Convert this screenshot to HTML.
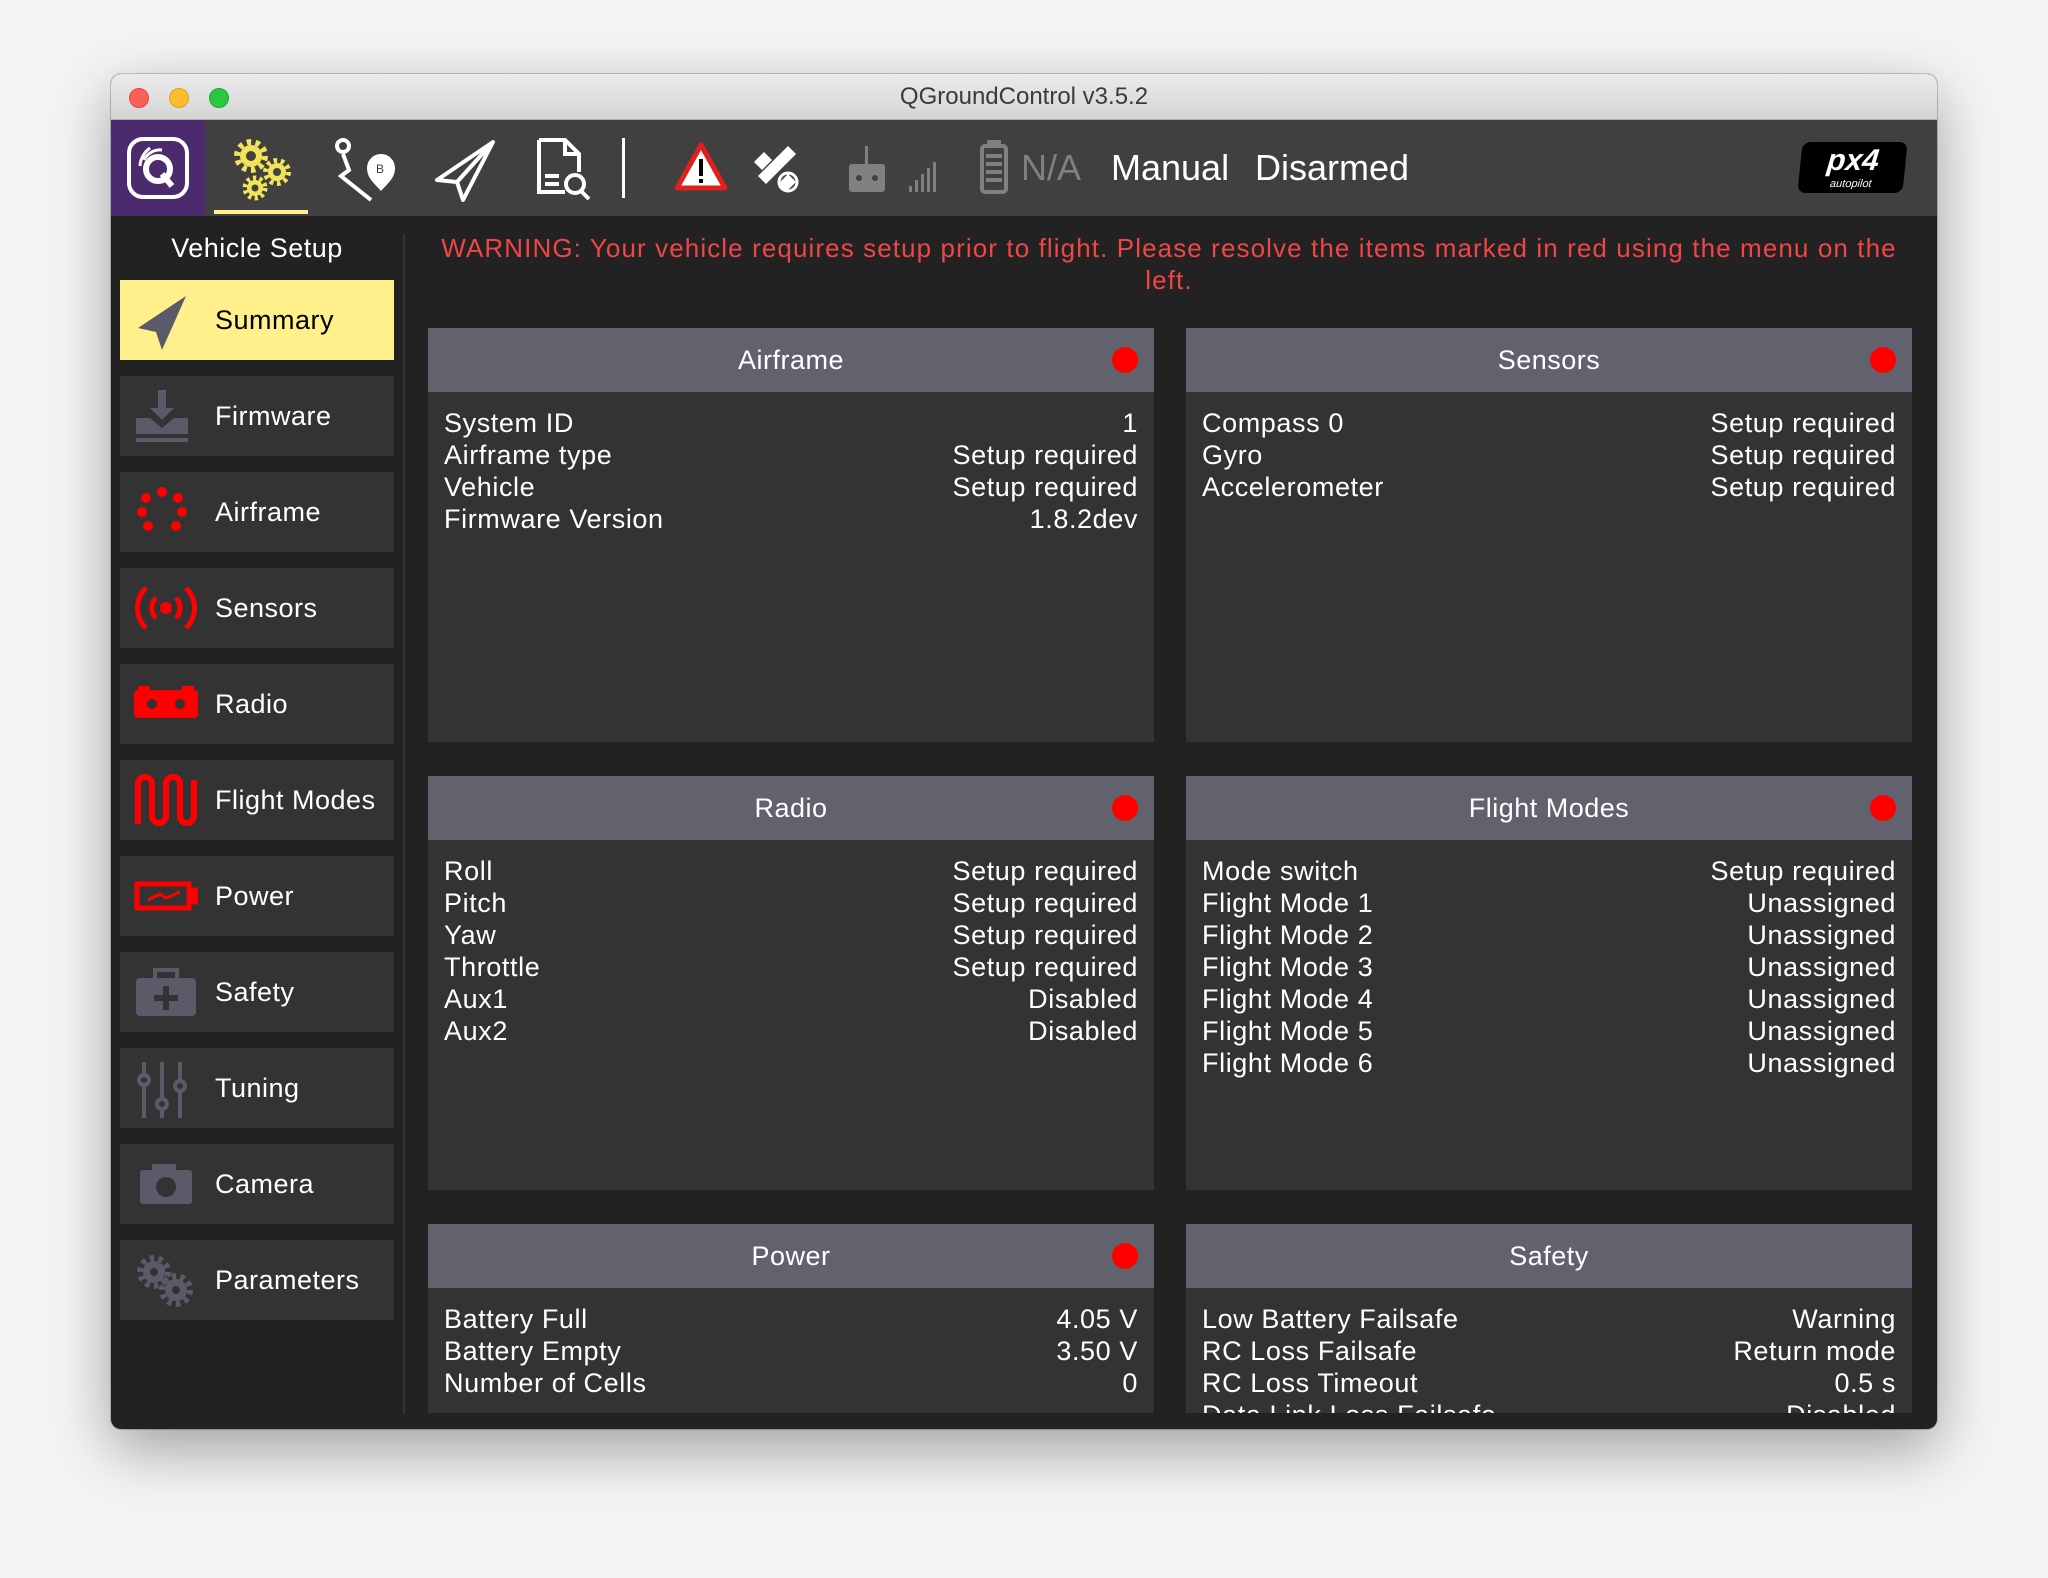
<!DOCTYPE html>
<html><head><meta charset="utf-8"><style>
*{margin:0;padding:0;box-sizing:border-box}
body{width:2048px;height:1578px;background:#f4f4f4;font-family:"Liberation Sans",sans-serif;position:relative;overflow:hidden}
.win{position:absolute;left:111px;top:74px;width:1826px;height:1355px;border-radius:10px;background:#222;box-shadow:0 20px 60px rgba(0,0,0,.35),0 0 0 1px rgba(0,0,0,.2);overflow:hidden}
.title{position:absolute;left:0;top:0;width:100%;height:46px;background:linear-gradient(#ebebeb,#d5d5d5);border-bottom:1px solid #b0b0b0;text-align:center;font-size:24px;line-height:46px;color:#3a3a3a}
.dot{position:absolute;top:14px;width:20px;height:20px;border-radius:50%}
.tb{position:absolute;left:0;top:46px;width:100%;height:96px;background:#404040}
.abs{position:absolute}
.side{position:absolute;left:9px;width:274px;height:80px;background:#333;color:#fff;font-size:27px;letter-spacing:0.5px}
.side span{position:absolute;left:95px;top:0;line-height:80px}
.side svg{position:absolute;left:14px;top:12px}
.panel{position:absolute;width:726px;background:#333;overflow:hidden}
.ph{height:64px;background:#62626e;color:#fff;font-size:27px;text-align:center;line-height:64px;position:relative;letter-spacing:0.5px}
.rd{position:absolute;right:16px;top:19px;width:26px;height:26px;border-radius:50%;background:#f00}
.pb{padding:15px 16px 0 16px;color:#fff;font-size:27px;letter-spacing:0.6px}
.r{display:flex;justify-content:space-between;height:32px;line-height:32px}
</style></head><body>
<div class="win">
<div class="title">QGroundControl v3.5.2
<div class="dot" style="left:18px;background:#fc5f57;border:1px solid #de4a42"></div>
<div class="dot" style="left:58px;background:#fdbc2e;border:1px solid #dea024"></div>
<div class="dot" style="left:98px;background:#29c840;border:1px solid #1fa831"></div>
</div>
<div class="tb">
<div class="abs" style="left:0;top:0;width:94px;height:96px;background:#4c2a6e"></div>
<svg class="abs" style="left:15px;top:16px" width="64" height="64" viewBox="0 0 64 64"><rect x="3" y="3" width="58" height="58" rx="14" fill="none" stroke="#fff" stroke-width="4"/><circle cx="32" cy="33" r="12" fill="none" stroke="#fff" stroke-width="6"/><path d="M36 38l10 12" stroke="#fff" stroke-width="6"/><path d="M18 24a18 18 0 0 1 18-10M14 30a24 24 0 0 1 10-18" stroke="#fff" stroke-width="3" fill="none"/></svg>
<div class="abs" style="left:103px;top:90px;width:94px;height:4px;background:#fff08c"></div>
<svg class="abs" style="left:118px;top:16px" width="66" height="66" viewBox="0 0 66 66">
<g fill="#f2e45a" stroke="#f2e45a">
<circle cx="22" cy="20" r="11" stroke="none"/><circle cx="22" cy="20" r="14" fill="none" stroke-width="6" stroke-dasharray="4.4 4.4"/>
<circle cx="48" cy="36" r="9" stroke="none"/><circle cx="48" cy="36" r="11.5" fill="none" stroke-width="5" stroke-dasharray="3.6 3.6"/>
<circle cx="26" cy="52" r="8" stroke="none"/><circle cx="26" cy="52" r="10" fill="none" stroke-width="5" stroke-dasharray="3.2 3.2"/>
</g><circle cx="22" cy="20" r="5" fill="#404040"/><circle cx="48" cy="36" r="4" fill="#404040"/><circle cx="26" cy="52" r="3.5" fill="#404040"/></svg>
<svg class="abs" style="left:222px;top:16px" width="64" height="68" viewBox="0 0 64 68" fill="none" stroke="#fff" stroke-width="4"><circle cx="10" cy="10" r="6"/><path d="M10 18l6 16-8 6 30 24"/><path d="M48 52c-10-10-12-14-12-20a12 12 0 0 1 24 0c0 6-2 10-12 20z" fill="#fff"/><text x="43" y="37" font-size="12" fill="#404040" stroke="none" font-family="Liberation Sans">B</text></svg>
<svg class="abs" style="left:322px;top:18px" width="64" height="64" viewBox="0 0 64 64" fill="none" stroke="#fff" stroke-width="4" stroke-linejoin="round"><path d="M60 4L4 42l20 2 6 18z M60 4L24 44 M60 4L30 62"/></svg>
<svg class="abs" style="left:422px;top:16px" width="64" height="66" viewBox="0 0 64 66" fill="none" stroke="#fff" stroke-width="4"><path d="M6 4h26l14 14v18M6 4v52h26M32 4v14h14"/><path d="M12 40h14M12 48h14"/><circle cx="42" cy="48" r="9"/><path d="M48 55l8 8"/></svg>
<div class="abs" style="left:511px;top:18px;width:3px;height:60px;background:#fff"></div>
<svg class="abs" style="left:563px;top:22px" width="54" height="50" viewBox="0 0 54 50"><path d="M27 3L51 46H3z" fill="#fff" stroke="#e0201c" stroke-width="5" stroke-linejoin="round"/><rect x="25" y="17" width="4" height="17" fill="#000"/><rect x="25" y="37" width="4" height="4" fill="#000"/></svg>
<svg class="abs" style="left:641px;top:20px" width="52" height="56" viewBox="0 0 52 56" fill="#fff"><path d="M6 36L36 6l8 8-30 30z"/><path d="M2 22l10-10 8 8-10 10zM26 44l10-10 8 8-10 10z"/><circle cx="36" cy="42" r="9" fill="none" stroke="#fff" stroke-width="3"/></svg>
<svg class="abs" style="left:736px;top:26px" width="40" height="48" viewBox="0 0 40 48" fill="#808080"><rect x="18" y="0" width="3" height="18"/><rect x="2" y="18" width="36" height="28" rx="3"/><circle cx="12" cy="32" r="3" fill="#404040"/><circle cx="28" cy="32" r="3" fill="#404040"/></svg>
<svg class="abs" style="left:798px;top:42px" width="28" height="30" viewBox="0 0 28 30" fill="#808080"><rect x="0" y="24" width="3" height="6"/><rect x="6" y="18" width="3" height="12"/><rect x="12" y="12" width="3" height="18"/><rect x="18" y="6" width="3" height="24"/><rect x="24" y="0" width="3" height="30"/></svg>
<svg class="abs" style="left:867px;top:20px" width="32" height="56" viewBox="0 0 32 56" fill="none" stroke="#808080" stroke-width="4"><rect x="4" y="6" width="24" height="46" rx="3"/><rect x="11" y="1" width="10" height="5" fill="#808080"/><path d="M8 16h16M8 24h16M8 32h16M8 40h16"/></svg>
<div class="abs" style="left:910px;top:22px;font-size:36px;color:#808080;line-height:52px">N/A</div>
<div class="abs" style="top:22px;left:1000px;font-size:36px;color:#fff;line-height:52px;white-space:nowrap">Manual</div>
<div class="abs" style="top:22px;left:1144px;font-size:36px;color:#fff;line-height:52px;white-space:nowrap">Disarmed</div>
<div class="abs" style="left:1689px;top:22px;width:105px;height:51px;background:#000;border-radius:8px;transform:skewX(-6deg);color:#fff;font-size:30px;font-weight:bold;font-style:italic;text-align:center;line-height:38px">px4<div style="font-size:11px;line-height:8px;font-weight:normal">autopilot</div></div>
</div>

<div class="abs" style="left:0;top:158px;width:292px;text-align:center;color:#fff;font-size:27px;line-height:32px;letter-spacing:0.5px">Vehicle Setup</div>
<div class="abs" style="left:292px;top:160px;width:2px;height:1180px;background:#333"></div>

<div class="side" style="top:206px;background:#fff08c;color:#000"><svg width="56" height="60" viewBox="0 0 56 60" fill="#5a5a68"><path d="M52 4L4 36l18 4z M52 4L22 40l6 18z"/></svg><span>Summary</span></div>
<div class="side" style="top:302px"><svg width="56" height="56" viewBox="0 0 56 56" fill="#5a5a68"><path d="M24 2h8v18h8L28 32 16 20h8z"/><path d="M2 30h14l12 10 12-10h14v16H2z"/><path d="M2 50h52v4H2z"/></svg><span>Firmware</span></div>
<div class="side" style="top:398px"><svg width="56" height="56" viewBox="0 0 56 56" fill="#f00"><circle cx="28" cy="8" r="5"/><circle cx="12" cy="14" r="5"/><circle cx="44" cy="14" r="5"/><circle cx="8" cy="28" r="5"/><circle cx="48" cy="28" r="5"/><circle cx="14" cy="42" r="5"/><circle cx="42" cy="42" r="5"/></svg><span>Airframe</span></div>
<div class="side" style="top:494px"><svg width="64" height="56" viewBox="0 0 64 56" fill="none" stroke="#f00" stroke-width="5"><circle cx="32" cy="28" r="6" fill="#f00" stroke="none"/><path d="M22 18a14 14 0 0 0 0 20M42 18a14 14 0 0 1 0 20M12 8a28 28 0 0 0 0 40M52 8a28 28 0 0 1 0 40"/></svg><span>Sensors</span></div>
<div class="side" style="top:590px"><svg width="64" height="56" viewBox="0 0 64 56" fill="#f00"><rect x="0" y="14" width="64" height="28" rx="4"/><rect x="4" y="10" width="12" height="4"/><rect x="48" y="10" width="12" height="4"/><circle cx="18" cy="28" r="5" fill="#333"/><circle cx="46" cy="28" r="5" fill="#333"/></svg><span>Radio</span></div>
<div class="side" style="top:686px"><svg width="64" height="56" viewBox="0 0 64 56" fill="none" stroke="#f00" stroke-width="6"><path d="M4 52V12a7 7 0 0 1 14 0v32a7 7 0 0 0 14 0V12a7 7 0 0 1 14 0v32a7 7 0 0 0 14 0V8"/></svg><span>Flight Modes</span></div>
<div class="side" style="top:782px"><svg width="64" height="56" viewBox="0 0 64 56" fill="none" stroke="#f00" stroke-width="5"><rect x="3" y="16" width="52" height="24"/><rect x="56" y="22" width="6" height="12" fill="#f00"/><path d="M14 32l12-6 6 4 14-6" stroke-width="3"/></svg><span>Power</span></div>
<div class="side" style="top:878px"><svg width="64" height="56" viewBox="0 0 64 56" fill="#5a5a68"><rect x="2" y="14" width="60" height="38" rx="4"/><rect x="21" y="6" width="22" height="10" fill="none" stroke="#5a5a68" stroke-width="4"/><path d="M29 22h6v9h9v6h-9v9h-6v-9h-9v-6h9z" fill="#333"/></svg><span>Safety</span></div>
<div class="side" style="top:974px"><svg width="56" height="60" viewBox="0 0 56 60" fill="none" stroke="#5a5a68" stroke-width="4"><path d="M10 2v56M28 2v56M46 2v56"/><circle cx="10" cy="20" r="5" fill="#333"/><circle cx="28" cy="44" r="5" fill="#333"/><circle cx="46" cy="26" r="5" fill="#333"/></svg><span>Tuning</span></div>
<div class="side" style="top:1070px"><svg width="64" height="56" viewBox="0 0 64 56" fill="#5a5a68"><rect x="6" y="14" width="52" height="34" rx="3"/><rect x="18" y="8" width="24" height="8"/><circle cx="32" cy="31" r="10" fill="#333"/></svg><span>Camera</span></div>
<div class="side" style="top:1166px"><svg width="64" height="56" viewBox="0 0 64 56"><g fill="#5a5a68" stroke="#5a5a68"><circle cx="20" cy="20" r="11" stroke="none"/><circle cx="20" cy="20" r="14" fill="none" stroke-width="6" stroke-dasharray="4.4 4.4"/><circle cx="42" cy="38" r="11" stroke="none"/><circle cx="42" cy="38" r="14" fill="none" stroke-width="6" stroke-dasharray="4.4 4.4"/></g><circle cx="20" cy="20" r="4" fill="#333"/><circle cx="42" cy="38" r="4" fill="#333"/></svg><span>Parameters</span></div>

<div class="abs" style="left:317px;top:158px;width:1482px;text-align:center;color:#f04646;font-size:26px;line-height:32px;white-space:nowrap;letter-spacing:1.1px">WARNING: Your vehicle requires setup prior to flight. Please resolve the items marked in red using the menu on the<br>left.</div>

<div class="panel" style="left:317px;top:254px;height:414px"><div class="ph">Airframe<div class="rd"></div></div><div class="pb">
<div class="r"><span>System ID</span><span>1</span></div><div class="r"><span>Airframe type</span><span>Setup required</span></div><div class="r"><span>Vehicle</span><span>Setup required</span></div><div class="r"><span>Firmware Version</span><span>1.8.2dev</span></div></div></div>
<div class="panel" style="left:1075px;top:254px;height:414px"><div class="ph">Sensors<div class="rd"></div></div><div class="pb">
<div class="r"><span>Compass 0</span><span>Setup required</span></div><div class="r"><span>Gyro</span><span>Setup required</span></div><div class="r"><span>Accelerometer</span><span>Setup required</span></div></div></div>
<div class="panel" style="left:317px;top:702px;height:414px"><div class="ph">Radio<div class="rd"></div></div><div class="pb">
<div class="r"><span>Roll</span><span>Setup required</span></div><div class="r"><span>Pitch</span><span>Setup required</span></div><div class="r"><span>Yaw</span><span>Setup required</span></div><div class="r"><span>Throttle</span><span>Setup required</span></div><div class="r"><span>Aux1</span><span>Disabled</span></div><div class="r"><span>Aux2</span><span>Disabled</span></div></div></div>
<div class="panel" style="left:1075px;top:702px;height:414px"><div class="ph">Flight Modes<div class="rd"></div></div><div class="pb">
<div class="r"><span>Mode switch</span><span>Setup required</span></div><div class="r"><span>Flight Mode 1</span><span>Unassigned</span></div><div class="r"><span>Flight Mode 2</span><span>Unassigned</span></div><div class="r"><span>Flight Mode 3</span><span>Unassigned</span></div><div class="r"><span>Flight Mode 4</span><span>Unassigned</span></div><div class="r"><span>Flight Mode 5</span><span>Unassigned</span></div><div class="r"><span>Flight Mode 6</span><span>Unassigned</span></div></div></div>
<div class="panel" style="left:317px;top:1150px;height:189px"><div class="ph">Power<div class="rd"></div></div><div class="pb">
<div class="r"><span>Battery Full</span><span>4.05 V</span></div><div class="r"><span>Battery Empty</span><span>3.50 V</span></div><div class="r"><span>Number of Cells</span><span>0</span></div></div></div>
<div class="panel" style="left:1075px;top:1150px;height:189px"><div class="ph">Safety</div><div class="pb">
<div class="r"><span>Low Battery Failsafe</span><span>Warning</span></div><div class="r"><span>RC Loss Failsafe</span><span>Return mode</span></div><div class="r"><span>RC Loss Timeout</span><span>0.5 s</span></div><div class="r"><span>Data Link Loss Failsafe</span><span>Disabled</span></div></div></div>
</div>
</body></html>
